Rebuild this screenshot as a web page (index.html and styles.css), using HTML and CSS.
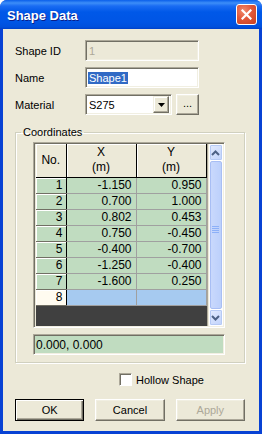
FILE: index.html
```html
<!DOCTYPE html>
<html lang="en">
<head>
    <meta charset="UTF-8">
    <title>Shape Data</title>
    <link rel="stylesheet" href="styles.css">
</head>
<body>
    <div class="window">
        <div class="titlebar">
            <span class="caption">Shape Data</span>
            <span class="close">
                <svg width="11" height="11" viewBox="0 0 11 11"><path d="M1.5 1.5 L9.5 9.5 M9.5 1.5 L1.5 9.5" stroke="#fff" stroke-width="2.2" stroke-linecap="square"/></svg>
            </span>
        </div>
        <div class="client">
            <div class="field-row">
                <label>Shape ID</label>
                <div class="edit disabled">1</div>
            </div>
            <div class="field-row">
                <label>Name</label>
                <div class="edit"><span class="sel">Shape1</span></div>
            </div>
            <div class="field-row">
                <label>Material</label>
                <div class="combo">
                    <span class="combo-text">S275</span>
                    <span class="drop">
                        <svg width="7" height="4" viewBox="0 0 7 4"><path d="M0 0 H7 L3.5 4 Z" fill="#000"/></svg>
                    </span>
                </div>
                <button class="btn small">...</button>
            </div>

            <fieldset class="group">
                <legend>Coordinates</legend>
                <div class="grid">
                    <div class="grid-main">
                        <table class="cells">
                            <thead>
                                <tr><th class="col-no">No.</th><th>X<br>(m)</th><th>Y<br>(m)</th></tr>
                            </thead>
                            <tbody>
                                <tr><td class="rowhead">1</td><td>-1.150</td><td>0.950</td></tr>
                                <tr><td class="rowhead">2</td><td>0.700</td><td>1.000</td></tr>
                                <tr><td class="rowhead">3</td><td>0.802</td><td>0.453</td></tr>
                                <tr><td class="rowhead">4</td><td>0.750</td><td>-0.450</td></tr>
                                <tr><td class="rowhead">5</td><td>-0.400</td><td>-0.700</td></tr>
                                <tr><td class="rowhead">6</td><td>-1.250</td><td>-0.400</td></tr>
                                <tr><td class="rowhead">7</td><td>-1.600</td><td>0.250</td></tr>
                                <tr class="new-row"><td class="rowhead">8</td><td></td><td></td></tr>
                            </tbody>
                        </table>
                        <div class="grid-empty"></div>
                    </div>
                    <div class="vscroll">
                        <div class="sb-btn">
                            <svg width="9" height="6" viewBox="0 0 9 6"><path d="M1 5 L4.5 1.5 L8 5" fill="none" stroke="#4D6185" stroke-width="2"/></svg>
                        </div>
                        <div class="sb-thumb">
                            <svg width="7" height="7" viewBox="0 0 7 7"><path d="M0 0.5 H7 M0 2.5 H7 M0 4.5 H7 M0 6.5 H7" stroke="#8CB0F8" stroke-width="1"/></svg>
                        </div>
                        <div class="sb-btn">
                            <svg width="9" height="6" viewBox="0 0 9 6"><path d="M1 1 L4.5 4.5 L8 1" fill="none" stroke="#4D6185" stroke-width="2"/></svg>
                        </div>
                    </div>
                </div>
                <div class="status">0.000, 0.000</div>
            </fieldset>

            <div class="check-row">
                <span class="checkbox"></span>
                <span>Hollow Shape</span>
            </div>

            <div class="buttons">
                <button class="btn default">OK</button>
                <button class="btn">Cancel</button>
                <button class="btn" disabled>Apply</button>
            </div>
        </div>
    </div>
</body>
</html>
```

FILE: styles.css
```css
body {
    margin: 0;
    background: #fff;
    font-family: "Liberation Sans", Arial, sans-serif;
    font-size: 11px;
    color: #000;
}

.window {
    width: 262px;
    height: 434px;
    display: flex;
    flex-direction: column;
    background: #0842D4;
    border-radius: 7px 7px 0 0;
    overflow: hidden;
}

.titlebar {
    height: 29px;
    flex: none;
    display: flex;
    align-items: center;
    justify-content: space-between;
    padding: 0 5px 0 7px;
    background: linear-gradient(#0A5FEA 0, #3D8EF8 3px, #1A6CF3 6px, #0058E8 12px, #0055E5 22px, #0050DC 27px, #0040C8 29px);
}

.caption {
    color: #fff;
    font-weight: bold;
    font-size: 13px;
    text-shadow: 1px 1px #0A1E8A;
    padding-top: 1px;
}

.close {
    width: 19px;
    height: 19px;
    border: 1px solid #fff;
    border-radius: 3px;
    background: radial-gradient(circle at 35% 30%, #F08B6E 0, #E2583A 45%, #C8401F 100%);
    display: flex;
    align-items: center;
    justify-content: center;
}

.client {
    flex: 1;
    margin: 0 3px 3px 3px;
    background: #ECE9D8;
    padding: 11px 14px 0 12px;
    display: flex;
    flex-direction: column;
}

.field-row {
    display: flex;
    align-items: center;
    height: 21px;
    margin-bottom: 6px;
}

.field-row label {
    width: 70px;
}

.edit, .combo, .status {
    box-sizing: border-box;
    height: 21px;
    border: 1px solid;
    border-color: #ACA899 #fff #fff #ACA899;
    box-shadow: inset 1px 1px #716F64, inset -1px -1px #F1EFE2;
    background: #fff;
    display: flex;
    align-items: center;
    padding-left: 3px;
}

.edit {
    width: 114px;
}

.edit.disabled {
    background: #ECE9D8;
    color: #ACA899;
}

.sel {
    background: #316AC5;
    color: #fff;
    padding: 0 1px;
    margin-left: -1px;
}

.combo {
    width: 87px;
    justify-content: space-between;
    padding-right: 2px;
}

.drop {
    width: 16px;
    height: 17px;
    box-sizing: border-box;
    background: #ECE9D8;
    border: 1px solid;
    border-color: #F1EFE2 #716F64 #716F64 #F1EFE2;
    box-shadow: inset -1px -1px #ACA899, inset 1px 1px #fff;
    display: flex;
    align-items: center;
    justify-content: center;
}

.btn {
    font-family: inherit;
    font-size: 11px;
    color: #000;
    background: #ECE9D8;
    border: 1px solid;
    border-color: #fff #716F64 #716F64 #fff;
    box-shadow: inset -1px -1px #ACA899, inset 1px 1px #F1EFE2;
    padding: 0;
    width: 70px;
    height: 22px;
}

.btn.small {
    width: 23px;
    height: 21px;
    margin-left: 4px;
    padding-bottom: 3px;
}

.btn.default {
    border: 1px solid #000;
    box-shadow: inset 1px 1px #fff, inset -1px -1px #716F64, inset -2px -2px #ACA899;
}

.btn:disabled {
    color: #ACA899;
}

.group {
    margin: 5px 0 0 0;
    padding: 3px 19px 7px 17px;
    border: 1px solid #D0D0BF;
    box-shadow: inset 1px 1px #fff, 1px 1px #fff;
    min-width: 0;
}

.group legend {
    padding: 0 2px;
    margin-left: -12px;
    line-height: 13px;
}

.grid {
    box-sizing: border-box;
    height: 186px;
    display: flex;
    border: 1px solid;
    border-color: #ACA899 #fff #fff #ACA899;
    box-shadow: inset 1px 1px #716F64, inset -1px -1px #F1EFE2;
    padding: 1px 1px 1px 2px;
    background: #ECE9D8;
}

.grid-main {
    flex: 1;
    display: flex;
    flex-direction: column;
    border-right: 1px solid #ACA899;
    margin-right: 1px;
}

.cells {
    border-collapse: collapse;
    table-layout: fixed;
    width: 170px;
    font-size: 12px;
}

.cells th {
    height: 33px;
    box-sizing: border-box;
    width: 70px;
    font-weight: normal;
    background: #ECE9D8;
    border: 1px solid #000;
    border-top: none;
    box-shadow: inset 1px 1px #fff;
    line-height: 15px;
    padding: 0;
}

.cells th.col-no {
    width: 30px;
    border-left: none;
}

.cells td {
    height: 16px;
    padding: 0 4px 0 0;
    box-sizing: border-box;
    text-align: right;
    background: #C0DCC0;
    border-right: 1px solid #A0A0A0;
    border-bottom: 1px solid #A0A0A0;
    line-height: 14px;
}

.cells td.rowhead {
    padding-right: 3px;
    border-right: 1px solid #000;
    border-bottom: 1px solid #716F64;
    box-shadow: inset 1px 1px #fff;
}

.new-row td {
    background: #A6CAF0;
}

.new-row td.rowhead {
    background: #FFFBF0;
}

.grid-empty {
    flex: 1;
    background: #404040;
}

.vscroll {
    width: 17px;
    display: flex;
    flex-direction: column;
    background: #FDFDFA;
}

.sb-btn {
    height: 17px;
    box-sizing: border-box;
    border: 1px solid #fff;
    border-radius: 2px;
    background: linear-gradient(135deg, #E3EBFE, #C1D3FB);
    box-shadow: inset 0 0 0 1px #B6CAF5;
    display: flex;
    align-items: center;
    justify-content: center;
}

.sb-thumb {
    flex: 1;
    margin: 0 1px;
    border: 1px solid #A8BEF4;
    border-radius: 2px;
    background: linear-gradient(90deg, #C9D8FC, #BCD0FB);
    display: flex;
    align-items: center;
    justify-content: center;
    padding-bottom: 12px;
}

.status {
    width: 192px;
    height: 21px;
    margin-top: 6px;
    background: #C0DCC0;
    padding-left: 2px;
    font-size: 12px;
}

.check-row {
    display: flex;
    align-items: center;
    margin: 10px 0 0 104px;
    height: 13px;
}

.checkbox {
    width: 13px;
    height: 13px;
    box-sizing: border-box;
    border: 1px solid;
    border-color: #ACA899 #fff #fff #ACA899;
    box-shadow: inset 1px 1px #716F64;
    background: #fff;
    margin-right: 4px;
}

.buttons {
    display: flex;
    gap: 11px;
    margin-top: 13px;
}
```
